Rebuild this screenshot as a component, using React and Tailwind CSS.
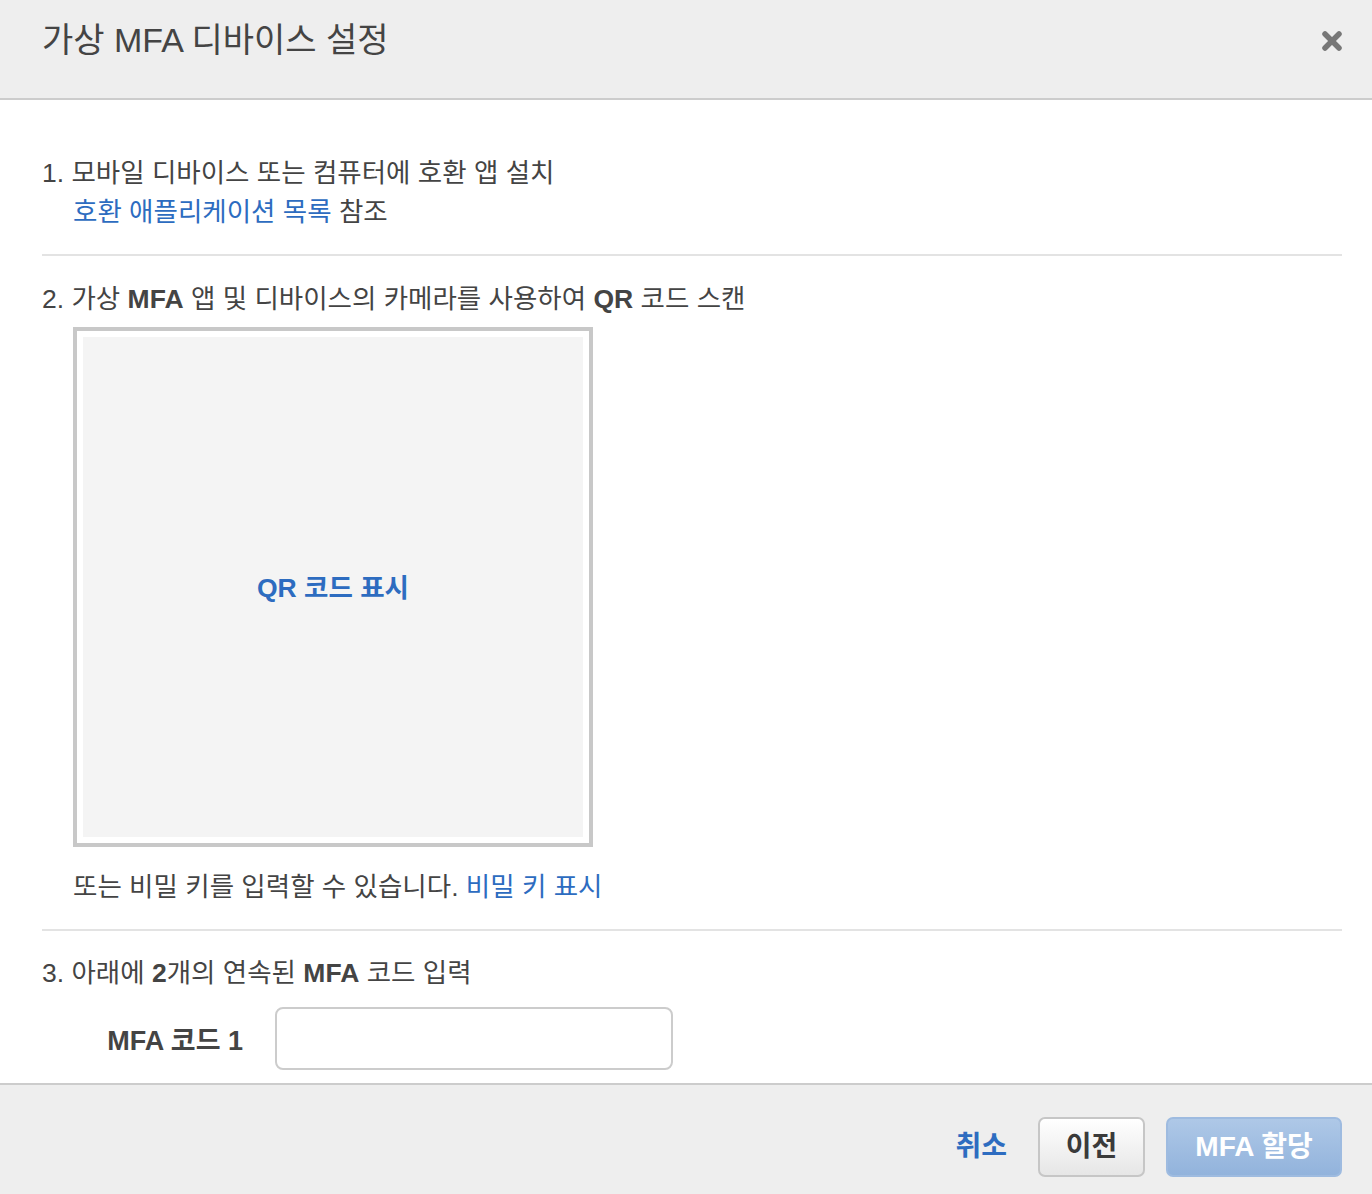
import React from "react";

const FONT = { fontFamily: '"Liberation Sans", "Noto Sans CJK KR", sans-serif' };

function CloseIcon() {
  return (
    <svg width="22" height="22" viewBox="0 0 22 22" aria-hidden="true">
      <line x1="4" y1="4" x2="18" y2="18" stroke="#777" strokeWidth="5.5" strokeLinecap="round" />
      <line x1="18" y1="4" x2="4" y2="18" stroke="#777" strokeWidth="5.5" strokeLinecap="round" />
    </svg>
  );
}

export default function App() {
  return (
    <div className="w-[1372px] h-[1194px] bg-white flex flex-col overflow-hidden text-[#444]" style={FONT}>
      {/* Header */}
      <div className="h-[100px] shrink-0 bg-[#eeeeee] border-b-2 border-[#cccccc] flex items-start justify-between pl-[42px] pr-[29px]">
        <h1 className="mt-[17px] text-[34px] leading-[46px] font-normal text-[#444]">가상 MFA 디바이스 설정</h1>
        <div className="mt-[30px]">
          <CloseIcon />
        </div>
      </div>

      {/* Body */}
      <div className="flex-1 overflow-hidden pl-[42px] pr-[30px] text-[26.5px]">
        <div className="pt-[54px] leading-[39px]">
          <div>1. 모바일 디바이스 또는 컴퓨터에 호환 앱 설치</div>
          <div className="pl-[31px]">
            <a className="text-[#2d6cc0]">호환 애플리케이션 목록</a> 참조
          </div>
        </div>

        <div className="mt-[22px] h-[2px] bg-[#e3e3e3]" />

        <div className="mt-[24px] leading-[39px]">
          2. 가상 <span className="font-bold">MFA</span> 앱 및 디바이스의 카메라를 사용하여 <span className="font-bold">QR</span> 코드 스캔
        </div>

        <div className="ml-[31px] mt-[8px] w-[520px] h-[520px] border-4 border-[#c8c8c8] p-[6px] bg-white">
          <div className="w-full h-full bg-[#f4f4f4] flex items-center justify-center">
            <a className="text-[#2d6cc0] font-bold text-[26.5px] leading-[39px] mt-[2px]">QR 코드 표시</a>
          </div>
        </div>

        <div className="mt-[21px] pl-[31px] leading-[39px]">
          또는 비밀 키를 입력할 수 있습니다. <a className="text-[#2d6cc0]">비밀 키 표시</a>
        </div>

        <div className="mt-[22px] h-[2px] bg-[#e3e3e3]" />

        <div className="mt-[23px] leading-[39px]">
          3. 아래에 <span className="font-bold">2</span>개의 연속된 <span className="font-bold">MFA</span> 코드 입력
        </div>

        <div className="mt-[14px] flex items-center gap-[32px] pl-[31px]">
          <label className="w-[170px] text-right font-bold text-[27px] leading-[39px] mt-[5px]">MFA 코드 1</label>
          <input
            type="text"
            className="w-[398px] h-[63px] border-2 border-[#cccccc] rounded-[8px] bg-white outline-none px-3"
          />
        </div>
      </div>

      {/* Footer */}
      <div className="h-[111px] shrink-0 bg-[#eeeeee] border-t-2 border-[#cccccc] flex items-start justify-end pr-[30px] pt-[32px]">
        <a className="mt-[12px] text-[#2d6cc0] font-bold text-[28px] leading-[36px] mr-[31px]">취소</a>
        <button className="w-[107px] h-[60px] rounded-[7px] border-2 border-[#c6c6c6] bg-gradient-to-b from-[#ffffff] to-[#e6e6e6] text-[#3a3a3a] font-bold text-[28px] mr-[21px]">
          이전
        </button>
        <button className="w-[176px] h-[60px] rounded-[7px] border-2 border-[#9ebbe0] bg-gradient-to-b from-[#aec8e7] to-[#92b3dc] text-white font-bold text-[28px]">
          MFA 할당
        </button>
      </div>
    </div>
  );
}
